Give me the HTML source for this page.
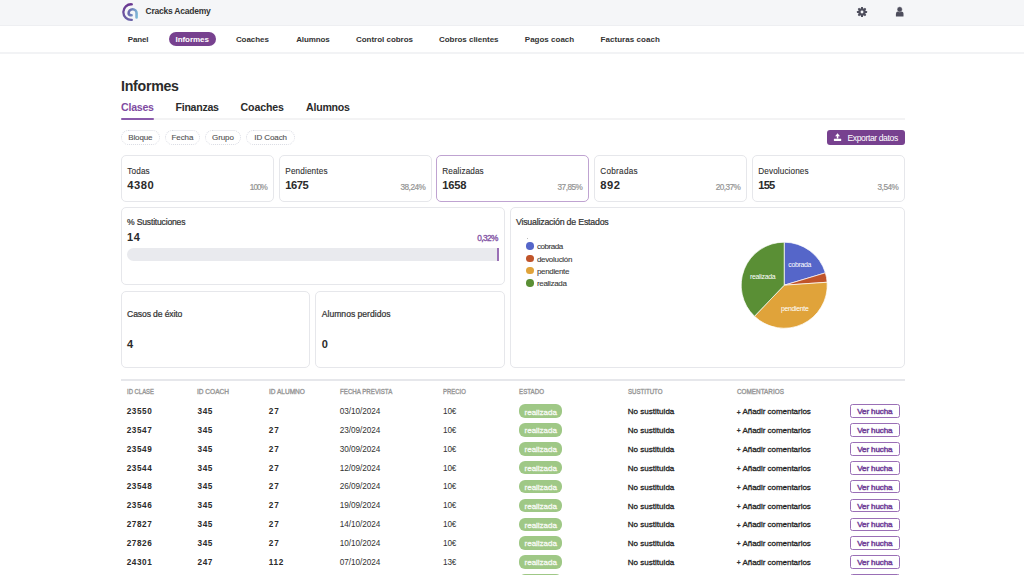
<!DOCTYPE html>
<html><head><meta charset="utf-8"><style>
html,body{margin:0;padding:0;width:1024px;height:575px;overflow:hidden;background:#fff}
body{position:relative;font-family:"Liberation Sans",sans-serif}
.t{position:absolute;line-height:0;white-space:nowrap}
.m{display:inline-block;width:0;height:0;vertical-align:baseline}
</style></head><body>
<div style="position:absolute;left:0.00px;top:0.00px;width:1024.00px;height:26.00px;background:#f5f6f8"></div>
<div style="position:absolute;left:0.00px;top:25.00px;width:1024.00px;height:1.00px;background:#eeeff2"></div>
<div style="position:absolute;left:0.00px;top:52.00px;width:1024.00px;height:2.00px;background:#f2f3f5"></div>
<div style="position:absolute;left:168.50px;top:32.00px;width:47.50px;height:14.00px;background:#77418f;border-radius:7px"></div>
<div style="position:absolute;left:121.00px;top:118.00px;width:784.00px;height:2.00px;background:#f3f3f4"></div>
<div style="position:absolute;left:121.00px;top:117.80px;width:33.40px;height:1.80px;background:#8a5aab;border-radius:1px"></div>
<div style="position:absolute;left:121.00px;top:130.00px;width:38.70px;height:14.80px;border:1px dotted #d9dbe3;border-radius:8px;box-sizing:border-box"></div>
<div style="position:absolute;left:165.00px;top:130.00px;width:35.00px;height:14.80px;border:1px dotted #d9dbe3;border-radius:8px;box-sizing:border-box"></div>
<div style="position:absolute;left:205.30px;top:130.00px;width:35.40px;height:14.80px;border:1px dotted #d9dbe3;border-radius:8px;box-sizing:border-box"></div>
<div style="position:absolute;left:246.30px;top:130.00px;width:48.70px;height:14.80px;border:1px dotted #d9dbe3;border-radius:8px;box-sizing:border-box"></div>
<div style="position:absolute;left:827.00px;top:130.00px;width:78.00px;height:15.00px;background:#77418f;border-radius:3px"></div>
<div style="position:absolute;left:121.00px;top:155.00px;width:153.00px;height:47.00px;border:1px solid #e6e7eb;border-radius:5px;box-sizing:border-box"></div>
<div style="position:absolute;left:279.00px;top:155.00px;width:153.00px;height:47.00px;border:1px solid #e6e7eb;border-radius:5px;box-sizing:border-box"></div>
<div style="position:absolute;left:436.00px;top:155.00px;width:153.00px;height:47.00px;border:1px solid #bfa3d1;border-radius:5px;box-sizing:border-box"></div>
<div style="position:absolute;left:594.00px;top:155.00px;width:153.00px;height:47.00px;border:1px solid #e6e7eb;border-radius:5px;box-sizing:border-box"></div>
<div style="position:absolute;left:752.00px;top:155.00px;width:153.00px;height:47.00px;border:1px solid #e6e7eb;border-radius:5px;box-sizing:border-box"></div>
<div style="position:absolute;left:121.00px;top:207.00px;width:384.00px;height:78.00px;border:1px solid #e6e7eb;border-radius:5px;box-sizing:border-box"></div>
<div style="position:absolute;left:127.00px;top:248.00px;width:372.00px;height:13.00px;background:#e9eaee;border-radius:6.5px 0 0 6.5px"></div>
<div style="position:absolute;left:497.10px;top:248.00px;width:1.90px;height:13.00px;background:#9a70b6"></div>
<div style="position:absolute;left:121.00px;top:291.00px;width:189.00px;height:77.00px;border:1px solid #e6e7eb;border-radius:5px;box-sizing:border-box"></div>
<div style="position:absolute;left:315.00px;top:291.00px;width:190.00px;height:77.00px;border:1px solid #e6e7eb;border-radius:5px;box-sizing:border-box"></div>
<div style="position:absolute;left:510.00px;top:207.00px;width:395.00px;height:161.00px;border:1px solid #e6e7eb;border-radius:5px;box-sizing:border-box"></div>
<div style="position:absolute;left:526.20px;top:242.40px;width:7.60px;height:7.60px;background:#5566c9;border-radius:50%"></div>
<div style="position:absolute;left:526.20px;top:254.70px;width:7.60px;height:7.60px;background:#c0542a;border-radius:50%"></div>
<div style="position:absolute;left:526.20px;top:266.80px;width:7.60px;height:7.60px;background:#e0a33a;border-radius:50%"></div>
<div style="position:absolute;left:526.20px;top:279.10px;width:7.60px;height:7.60px;background:#5a8f35;border-radius:50%"></div>
<div style="position:absolute;left:527.00px;top:238.40px;width:0.80px;height:0.80px;background:#bbb"></div>
<div style="position:absolute;left:121.00px;top:379.00px;width:784.00px;height:1.60px;background:#e6e7eb"></div>
<div style="position:absolute;left:519.20px;top:404.40px;width:43.10px;height:13.50px;background:#9fc886;border-radius:6px"></div>
<div style="position:absolute;left:850.30px;top:404.40px;width:49.40px;height:13.70px;border:1px solid #9a6fb6;border-radius:2.5px;box-sizing:border-box;background:#fff"></div>
<div style="position:absolute;left:519.20px;top:423.25px;width:43.10px;height:13.50px;background:#9fc886;border-radius:6px"></div>
<div style="position:absolute;left:850.30px;top:423.25px;width:49.40px;height:13.70px;border:1px solid #9a6fb6;border-radius:2.5px;box-sizing:border-box;background:#fff"></div>
<div style="position:absolute;left:519.20px;top:442.10px;width:43.10px;height:13.50px;background:#9fc886;border-radius:6px"></div>
<div style="position:absolute;left:850.30px;top:442.10px;width:49.40px;height:13.70px;border:1px solid #9a6fb6;border-radius:2.5px;box-sizing:border-box;background:#fff"></div>
<div style="position:absolute;left:519.20px;top:460.95px;width:43.10px;height:13.50px;background:#9fc886;border-radius:6px"></div>
<div style="position:absolute;left:850.30px;top:460.95px;width:49.40px;height:13.70px;border:1px solid #9a6fb6;border-radius:2.5px;box-sizing:border-box;background:#fff"></div>
<div style="position:absolute;left:519.20px;top:479.80px;width:43.10px;height:13.50px;background:#9fc886;border-radius:6px"></div>
<div style="position:absolute;left:850.30px;top:479.80px;width:49.40px;height:13.70px;border:1px solid #9a6fb6;border-radius:2.5px;box-sizing:border-box;background:#fff"></div>
<div style="position:absolute;left:519.20px;top:498.65px;width:43.10px;height:13.50px;background:#9fc886;border-radius:6px"></div>
<div style="position:absolute;left:850.30px;top:498.65px;width:49.40px;height:13.70px;border:1px solid #9a6fb6;border-radius:2.5px;box-sizing:border-box;background:#fff"></div>
<div style="position:absolute;left:519.20px;top:517.50px;width:43.10px;height:13.50px;background:#9fc886;border-radius:6px"></div>
<div style="position:absolute;left:850.30px;top:517.50px;width:49.40px;height:13.70px;border:1px solid #9a6fb6;border-radius:2.5px;box-sizing:border-box;background:#fff"></div>
<div style="position:absolute;left:519.20px;top:536.35px;width:43.10px;height:13.50px;background:#9fc886;border-radius:6px"></div>
<div style="position:absolute;left:850.30px;top:536.35px;width:49.40px;height:13.70px;border:1px solid #9a6fb6;border-radius:2.5px;box-sizing:border-box;background:#fff"></div>
<div style="position:absolute;left:519.20px;top:555.20px;width:43.10px;height:13.50px;background:#9fc886;border-radius:6px"></div>
<div style="position:absolute;left:850.30px;top:555.20px;width:49.40px;height:13.70px;border:1px solid #9a6fb6;border-radius:2.5px;box-sizing:border-box;background:#fff"></div>
<div style="position:absolute;left:519.20px;top:574.05px;width:43.10px;height:13.50px;background:#9fc886;border-radius:6px"></div>
<div style="position:absolute;left:850.30px;top:574.05px;width:49.40px;height:13.70px;border:1px solid #9a6fb6;border-radius:2.5px;box-sizing:border-box;background:#fff"></div>
<svg style="position:absolute;left:115px;top:0" width="30" height="25" viewBox="0 0 30 25">
<defs><linearGradient id="lg" gradientUnits="userSpaceOnUse" x1="12" y1="12" x2="23" y2="14"><stop offset="0" stop-color="#6659a6"/><stop offset="1" stop-color="#7fbcd9"/></linearGradient>
<linearGradient id="lg2" gradientUnits="userSpaceOnUse" x1="0" y1="4" x2="0" y2="20"><stop offset="0" stop-color="#6a3590"/><stop offset="1" stop-color="#6b63a8"/></linearGradient></defs>
<path d="M16.8 4.28 A7.8 7.8 0 1 0 16.8 19.82" fill="none" stroke="url(#lg2)" stroke-width="2.3" stroke-linecap="round"/>
<path d="M16.6 15.3 C15 15.3 13.65 14.6 13.65 13.2 A3.97 3.97 0 0 1 21.6 13.2 L21.6 17.4" fill="none" stroke="url(#lg)" stroke-width="2.6" stroke-linecap="round"/>
</svg>
<svg style="position:absolute;left:856px;top:5.8px" width="12" height="12" viewBox="0 0 12 12"><g><rect x="5.00" y="0.90" width="2" height="2.6" rx="0.4" transform="rotate(0 6 6)" fill="#4d4d5c"/><rect x="5.00" y="0.90" width="2" height="2.6" rx="0.4" transform="rotate(45 6 6)" fill="#4d4d5c"/><rect x="5.00" y="0.90" width="2" height="2.6" rx="0.4" transform="rotate(90 6 6)" fill="#4d4d5c"/><rect x="5.00" y="0.90" width="2" height="2.6" rx="0.4" transform="rotate(135 6 6)" fill="#4d4d5c"/><rect x="5.00" y="0.90" width="2" height="2.6" rx="0.4" transform="rotate(180 6 6)" fill="#4d4d5c"/><rect x="5.00" y="0.90" width="2" height="2.6" rx="0.4" transform="rotate(225 6 6)" fill="#4d4d5c"/><rect x="5.00" y="0.90" width="2" height="2.6" rx="0.4" transform="rotate(270 6 6)" fill="#4d4d5c"/><rect x="5.00" y="0.90" width="2" height="2.6" rx="0.4" transform="rotate(315 6 6)" fill="#4d4d5c"/></g><circle cx="6" cy="6" r="3.7" fill="#4d4d5c"/><circle cx="6" cy="6" r="1.45" fill="#f5f6f8"/></svg>
<svg style="position:absolute;left:895px;top:6px" width="10" height="11" viewBox="0 0 10 11"><path d="M0.9 10.2 V7.9 Q0.9 5.6 3.2 5.6 H5.8 Q8.5 5.6 8.5 7.9 V10.2 Q8.5 10.6 8.1 10.6 H1.3 Q0.9 10.6 0.9 10.2 Z" fill="#4d4d5c"/><circle cx="4.7" cy="3.4" r="2.55" fill="#4d4d5c" stroke="#f5f6f8" stroke-width="0.35"/></svg>
<svg style="position:absolute;left:833px;top:133px" width="9" height="8" viewBox="0 0 9 8"><path d="M4.55 0.2 L7.0 3.3 H5.3 V5.5 H3.8 V3.3 H2.1 Z" fill="#fff"/><rect x="0.9" y="5.7" width="7.3" height="2.2" rx="0.3" fill="#fff"/></svg>
<svg style="position:absolute;left:0;top:0" width="1024" height="575"><path d="M784.20 285.20 L784.20 242.20 A43 43 0 0 1 825.39 272.85 Z" fill="#5566c9" stroke="#fff" stroke-width="0.7"/><path d="M784.20 285.20 L825.39 272.85 A43 43 0 0 1 827.10 282.24 Z" fill="#c0542a" stroke="#fff" stroke-width="0.7"/><path d="M784.20 285.20 L827.10 282.24 A43 43 0 0 1 754.48 316.27 Z" fill="#e0a33a" stroke="#fff" stroke-width="0.7"/><path d="M784.20 285.20 L754.48 316.27 A43 43 0 0 1 784.20 242.20 Z" fill="#5a8f35" stroke="#fff" stroke-width="0.7"/></svg>
<div class="t" style="left:145.50px;top:11.31px;font-size:8.50px;font-weight:bold;color:#333;letter-spacing:-0.231px;">Cracks Academy</div>
<div class="t" style="left:127.80px;top:39.81px;font-size:8.00px;font-weight:bold;color:#333;letter-spacing:-0.161px;">Panel</div>
<div class="t" style="left:175.50px;top:39.81px;font-size:8.00px;font-weight:bold;color:#fff;letter-spacing:-0.057px;">Informes</div>
<div class="t" style="left:235.90px;top:39.81px;font-size:8.00px;font-weight:bold;color:#333;letter-spacing:-0.043px;">Coaches</div>
<div class="t" style="left:296.20px;top:39.81px;font-size:8.00px;font-weight:bold;color:#333;letter-spacing:-0.139px;">Alumnos</div>
<div class="t" style="left:356.00px;top:39.81px;font-size:8.00px;font-weight:bold;color:#333;letter-spacing:-0.026px;">Control cobros</div>
<div class="t" style="left:439.00px;top:39.81px;font-size:8.00px;font-weight:bold;color:#333;letter-spacing:-0.037px;">Cobros clientes</div>
<div class="t" style="left:524.80px;top:39.81px;font-size:8.00px;font-weight:bold;color:#333;letter-spacing:0.004px;">Pagos coach</div>
<div class="t" style="left:600.60px;top:39.81px;font-size:8.00px;font-weight:bold;color:#333;letter-spacing:0.038px;">Facturas coach</div>
<div class="t" style="left:121.00px;top:85.75px;font-size:14.20px;font-weight:bold;color:#2b2b2b;letter-spacing:-0.275px;">Informes</div>
<div class="t" style="left:121.00px;top:107.21px;font-size:10.60px;font-weight:bold;color:#7f4ca2;letter-spacing:-0.234px;">Clases</div>
<div class="t" style="left:175.50px;top:107.21px;font-size:10.60px;font-weight:bold;color:#2b2b2b;letter-spacing:-0.263px;">Finanzas</div>
<div class="t" style="left:240.50px;top:107.21px;font-size:10.60px;font-weight:bold;color:#2b2b2b;letter-spacing:-0.112px;">Coaches</div>
<div class="t" style="left:306.00px;top:107.21px;font-size:10.60px;font-weight:bold;color:#2b2b2b;letter-spacing:-0.221px;">Alumnos</div>
<div class="t" style="left:140.30px;top:138.31px;font-size:8.00px;-webkit-text-stroke:0.1px #505050;color:#505050;transform:translateX(-50%);letter-spacing:-0.100px;">Bloque</div>
<div class="t" style="left:182.44px;top:138.31px;font-size:8.00px;-webkit-text-stroke:0.1px #505050;color:#505050;transform:translateX(-50%);letter-spacing:-0.111px;">Fecha</div>
<div class="t" style="left:222.94px;top:138.31px;font-size:8.00px;-webkit-text-stroke:0.1px #505050;color:#505050;transform:translateX(-50%);letter-spacing:-0.111px;">Grupo</div>
<div class="t" style="left:270.60px;top:138.31px;font-size:8.00px;-webkit-text-stroke:0.1px #505050;color:#505050;transform:translateX(-50%);letter-spacing:-0.095px;">ID Coach</div>
<div class="t" style="left:847.40px;top:138.00px;font-size:8.60px;color:#fff;letter-spacing:-0.392px;">Exportar datos</div>
<div class="t" style="left:127.30px;top:171.80px;font-size:8.20px;-webkit-text-stroke:0.1px #303030;color:#303030;letter-spacing:0.135px;">Todas</div>
<div class="t" style="left:127.30px;top:185.01px;font-size:11.20px;font-weight:bold;color:#2b2b2b;letter-spacing:0.536px;">4380</div>
<div class="t" style="right:756.20px;top:187.61px;font-size:8.20px;-webkit-text-stroke:0.2px #949494;color:#949494;letter-spacing:-0.984px;margin-right:0.984px;">100%</div>
<div class="t" style="left:285.30px;top:171.80px;font-size:8.20px;-webkit-text-stroke:0.1px #303030;color:#303030;letter-spacing:0.135px;">Pendientes</div>
<div class="t" style="left:285.30px;top:185.01px;font-size:11.20px;font-weight:bold;color:#2b2b2b;letter-spacing:-0.497px;">1675</div>
<div class="t" style="right:598.20px;top:187.61px;font-size:8.20px;-webkit-text-stroke:0.2px #949494;color:#949494;letter-spacing:-0.476px;margin-right:0.476px;">38,24%</div>
<div class="t" style="left:442.30px;top:171.80px;font-size:8.20px;-webkit-text-stroke:0.1px #303030;color:#303030;letter-spacing:0.098px;">Realizadas</div>
<div class="t" style="left:442.30px;top:185.01px;font-size:11.20px;font-weight:bold;color:#2b2b2b;letter-spacing:-0.230px;">1658</div>
<div class="t" style="right:441.20px;top:187.61px;font-size:8.20px;-webkit-text-stroke:0.2px #949494;color:#949494;letter-spacing:-0.496px;margin-right:0.496px;">37,85%</div>
<div class="t" style="left:600.30px;top:171.80px;font-size:8.20px;-webkit-text-stroke:0.1px #303030;color:#303030;letter-spacing:0.269px;">Cobradas</div>
<div class="t" style="left:600.30px;top:185.01px;font-size:11.20px;font-weight:bold;color:#2b2b2b;letter-spacing:0.464px;">892</div>
<div class="t" style="right:283.20px;top:187.61px;font-size:8.20px;-webkit-text-stroke:0.2px #949494;color:#949494;letter-spacing:-0.556px;margin-right:0.556px;">20,37%</div>
<div class="t" style="left:758.30px;top:171.80px;font-size:8.20px;-webkit-text-stroke:0.1px #303030;color:#303030;letter-spacing:0.099px;">Devoluciones</div>
<div class="t" style="left:758.30px;top:185.01px;font-size:11.20px;font-weight:bold;color:#2b2b2b;letter-spacing:-0.836px;">155</div>
<div class="t" style="right:125.20px;top:187.61px;font-size:8.20px;-webkit-text-stroke:0.2px #949494;color:#949494;letter-spacing:-0.492px;margin-right:0.492px;">3,54%</div>
<div class="t" style="left:127.10px;top:222.41px;font-size:8.60px;-webkit-text-stroke:0.22px #333;color:#333;letter-spacing:-0.197px;">% Sustituciones</div>
<div class="t" style="left:127.10px;top:237.00px;font-size:11.00px;font-weight:bold;color:#2b2b2b;letter-spacing:0.613px;">14</div>
<div class="t" style="right:525.60px;top:238.32px;font-size:8.30px;-webkit-text-stroke:0.35px #8455a6;color:#8455a6;letter-spacing:-0.608px;margin-right:0.608px;">0,32%</div>
<div class="t" style="left:127.10px;top:313.61px;font-size:8.60px;-webkit-text-stroke:0.22px #333;color:#333;letter-spacing:-0.120px;">Casos de éxito</div>
<div class="t" style="left:127.10px;top:343.50px;font-size:11.00px;font-weight:bold;color:#2b2b2b;">4</div>
<div class="t" style="left:321.80px;top:313.61px;font-size:8.60px;-webkit-text-stroke:0.22px #333;color:#333;letter-spacing:-0.006px;">Alumnos perdidos</div>
<div class="t" style="left:321.80px;top:343.50px;font-size:11.00px;font-weight:bold;color:#2b2b2b;">0</div>
<div class="t" style="left:515.90px;top:222.10px;font-size:8.80px;-webkit-text-stroke:0.22px #333;color:#333;letter-spacing:-0.207px;">Visualización de Estados</div>
<div class="t" style="left:536.90px;top:247.31px;font-size:8.00px;-webkit-text-stroke:0.1px #3a3a3a;color:#3a3a3a;letter-spacing:-0.437px;">cobrada</div>
<div class="t" style="left:536.90px;top:259.60px;font-size:8.00px;-webkit-text-stroke:0.1px #3a3a3a;color:#3a3a3a;letter-spacing:-0.306px;">devolución</div>
<div class="t" style="left:536.90px;top:271.70px;font-size:8.00px;-webkit-text-stroke:0.1px #3a3a3a;color:#3a3a3a;letter-spacing:-0.320px;">pendiente</div>
<div class="t" style="left:536.90px;top:284.01px;font-size:8.00px;-webkit-text-stroke:0.1px #3a3a3a;color:#3a3a3a;letter-spacing:-0.309px;">realizada</div>
<div class="t" style="left:799.63px;top:265.30px;font-size:6.90px;color:#fff;transform:translateX(-50%);letter-spacing:-0.334px;">cobrada</div>
<div class="t" style="left:762.65px;top:277.21px;font-size:6.90px;color:#fff;transform:translateX(-50%);letter-spacing:-0.296px;">realizada</div>
<div class="t" style="left:794.74px;top:309.30px;font-size:6.90px;color:#fff;transform:translateX(-50%);letter-spacing:-0.323px;">pendiente</div>
<div class="t" style="left:126.70px;top:391.61px;font-size:6.80px;-webkit-text-stroke:0.35px #979797;color:#979797;transform:scaleX(0.8714);transform-origin:left;">ID CLASE</div>
<div class="t" style="left:197.40px;top:391.61px;font-size:6.80px;-webkit-text-stroke:0.35px #979797;color:#979797;transform:scaleX(0.9629);transform-origin:left;">ID COACH</div>
<div class="t" style="left:268.70px;top:391.61px;font-size:6.80px;-webkit-text-stroke:0.35px #979797;color:#979797;transform:scaleX(0.9601);transform-origin:left;">ID ALUMNO</div>
<div class="t" style="left:339.80px;top:391.61px;font-size:6.80px;-webkit-text-stroke:0.35px #979797;color:#979797;transform:scaleX(0.9069);transform-origin:left;">FECHA PREVISTA</div>
<div class="t" style="left:442.90px;top:391.61px;font-size:6.80px;-webkit-text-stroke:0.35px #979797;color:#979797;transform:scaleX(0.8748);transform-origin:left;">PRECIO</div>
<div class="t" style="left:519.20px;top:391.61px;font-size:6.80px;-webkit-text-stroke:0.35px #979797;color:#979797;transform:scaleX(0.9106);transform-origin:left;">ESTADO</div>
<div class="t" style="left:627.80px;top:391.61px;font-size:6.80px;-webkit-text-stroke:0.35px #979797;color:#979797;transform:scaleX(0.8983);transform-origin:left;">SUSTITUTO</div>
<div class="t" style="left:736.60px;top:391.61px;font-size:6.80px;-webkit-text-stroke:0.35px #979797;color:#979797;transform:scaleX(0.9360);transform-origin:left;">COMENTARIOS</div>
<div class="t" style="left:126.70px;top:412.00px;font-size:8.20px;font-weight:bold;color:#2b2b2b;letter-spacing:0.570px;">23550</div>
<div class="t" style="left:197.40px;top:412.00px;font-size:8.20px;font-weight:bold;color:#2b2b2b;letter-spacing:0.684px;">345</div>
<div class="t" style="left:268.70px;top:412.00px;font-size:8.20px;font-weight:bold;color:#2b2b2b;letter-spacing:0.911px;">27</div>
<div class="t" style="left:339.80px;top:412.00px;font-size:8.20px;color:#333;letter-spacing:-0.046px;">03/10/2024</div>
<div class="t" style="left:442.90px;top:412.00px;font-size:8.20px;color:#333;letter-spacing:-0.068px;">10€</div>
<div class="t" style="left:627.80px;top:412.31px;font-size:8.00px;-webkit-text-stroke:0.3px #262626;color:#262626;letter-spacing:0.021px;">No sustituida</div>
<div class="t" style="left:736.70px;top:412.51px;font-size:6.60px;-webkit-text-stroke:0.35px #333;color:#333;">+</div>
<div class="t" style="left:742.50px;top:412.31px;font-size:8.00px;-webkit-text-stroke:0.3px #262626;color:#262626;letter-spacing:-0.037px;">Añadir comentarios</div>
<div class="t" style="left:540.74px;top:412.51px;font-size:8.00px;-webkit-text-stroke:0.3px #f6f9f3;color:#f6f9f3;transform:translateX(-50%);letter-spacing:-0.021px;">realizada</div>
<div class="t" style="left:874.84px;top:412.31px;font-size:8.00px;-webkit-text-stroke:0.5px #74449a;color:#74449a;transform:translateX(-50%);letter-spacing:-0.116px;">Ver hucha</div>
<div class="t" style="left:126.70px;top:430.86px;font-size:8.20px;font-weight:bold;color:#2b2b2b;letter-spacing:0.570px;">23547</div>
<div class="t" style="left:197.40px;top:430.86px;font-size:8.20px;font-weight:bold;color:#2b2b2b;letter-spacing:0.684px;">345</div>
<div class="t" style="left:268.70px;top:430.86px;font-size:8.20px;font-weight:bold;color:#2b2b2b;letter-spacing:0.911px;">27</div>
<div class="t" style="left:339.80px;top:430.86px;font-size:8.20px;color:#333;letter-spacing:-0.046px;">23/09/2024</div>
<div class="t" style="left:442.90px;top:430.86px;font-size:8.20px;color:#333;letter-spacing:-0.068px;">10€</div>
<div class="t" style="left:627.80px;top:431.15px;font-size:8.00px;-webkit-text-stroke:0.3px #262626;color:#262626;letter-spacing:0.021px;">No sustituida</div>
<div class="t" style="left:736.70px;top:431.36px;font-size:6.60px;-webkit-text-stroke:0.35px #333;color:#333;">+</div>
<div class="t" style="left:742.50px;top:431.15px;font-size:8.00px;-webkit-text-stroke:0.3px #262626;color:#262626;letter-spacing:-0.037px;">Añadir comentarios</div>
<div class="t" style="left:540.74px;top:431.35px;font-size:8.00px;-webkit-text-stroke:0.3px #f6f9f3;color:#f6f9f3;transform:translateX(-50%);letter-spacing:-0.021px;">realizada</div>
<div class="t" style="left:874.84px;top:431.15px;font-size:8.00px;-webkit-text-stroke:0.5px #74449a;color:#74449a;transform:translateX(-50%);letter-spacing:-0.116px;">Ver hucha</div>
<div class="t" style="left:126.70px;top:449.70px;font-size:8.20px;font-weight:bold;color:#2b2b2b;letter-spacing:0.570px;">23549</div>
<div class="t" style="left:197.40px;top:449.70px;font-size:8.20px;font-weight:bold;color:#2b2b2b;letter-spacing:0.684px;">345</div>
<div class="t" style="left:268.70px;top:449.70px;font-size:8.20px;font-weight:bold;color:#2b2b2b;letter-spacing:0.911px;">27</div>
<div class="t" style="left:339.80px;top:449.70px;font-size:8.20px;color:#333;letter-spacing:-0.046px;">30/09/2024</div>
<div class="t" style="left:442.90px;top:449.70px;font-size:8.20px;color:#333;letter-spacing:-0.068px;">10€</div>
<div class="t" style="left:627.80px;top:450.01px;font-size:8.00px;-webkit-text-stroke:0.3px #262626;color:#262626;letter-spacing:0.021px;">No sustituida</div>
<div class="t" style="left:736.70px;top:450.21px;font-size:6.60px;-webkit-text-stroke:0.35px #333;color:#333;">+</div>
<div class="t" style="left:742.50px;top:450.01px;font-size:8.00px;-webkit-text-stroke:0.3px #262626;color:#262626;letter-spacing:-0.037px;">Añadir comentarios</div>
<div class="t" style="left:540.74px;top:450.20px;font-size:8.00px;-webkit-text-stroke:0.3px #f6f9f3;color:#f6f9f3;transform:translateX(-50%);letter-spacing:-0.021px;">realizada</div>
<div class="t" style="left:874.84px;top:450.01px;font-size:8.00px;-webkit-text-stroke:0.5px #74449a;color:#74449a;transform:translateX(-50%);letter-spacing:-0.116px;">Ver hucha</div>
<div class="t" style="left:126.70px;top:468.55px;font-size:8.20px;font-weight:bold;color:#2b2b2b;letter-spacing:0.570px;">23544</div>
<div class="t" style="left:197.40px;top:468.55px;font-size:8.20px;font-weight:bold;color:#2b2b2b;letter-spacing:0.684px;">345</div>
<div class="t" style="left:268.70px;top:468.55px;font-size:8.20px;font-weight:bold;color:#2b2b2b;letter-spacing:0.911px;">27</div>
<div class="t" style="left:339.80px;top:468.55px;font-size:8.20px;color:#333;letter-spacing:-0.046px;">12/09/2024</div>
<div class="t" style="left:442.90px;top:468.55px;font-size:8.20px;color:#333;letter-spacing:-0.068px;">10€</div>
<div class="t" style="left:627.80px;top:468.85px;font-size:8.00px;-webkit-text-stroke:0.3px #262626;color:#262626;letter-spacing:0.021px;">No sustituida</div>
<div class="t" style="left:736.70px;top:469.06px;font-size:6.60px;-webkit-text-stroke:0.35px #333;color:#333;">+</div>
<div class="t" style="left:742.50px;top:468.85px;font-size:8.00px;-webkit-text-stroke:0.3px #262626;color:#262626;letter-spacing:-0.037px;">Añadir comentarios</div>
<div class="t" style="left:540.74px;top:469.06px;font-size:8.00px;-webkit-text-stroke:0.3px #f6f9f3;color:#f6f9f3;transform:translateX(-50%);letter-spacing:-0.021px;">realizada</div>
<div class="t" style="left:874.84px;top:468.85px;font-size:8.00px;-webkit-text-stroke:0.5px #74449a;color:#74449a;transform:translateX(-50%);letter-spacing:-0.116px;">Ver hucha</div>
<div class="t" style="left:126.70px;top:487.41px;font-size:8.20px;font-weight:bold;color:#2b2b2b;letter-spacing:0.570px;">23548</div>
<div class="t" style="left:197.40px;top:487.41px;font-size:8.20px;font-weight:bold;color:#2b2b2b;letter-spacing:0.684px;">345</div>
<div class="t" style="left:268.70px;top:487.41px;font-size:8.20px;font-weight:bold;color:#2b2b2b;letter-spacing:0.911px;">27</div>
<div class="t" style="left:339.80px;top:487.41px;font-size:8.20px;color:#333;letter-spacing:-0.046px;">26/09/2024</div>
<div class="t" style="left:442.90px;top:487.41px;font-size:8.20px;color:#333;letter-spacing:-0.068px;">10€</div>
<div class="t" style="left:627.80px;top:487.70px;font-size:8.00px;-webkit-text-stroke:0.3px #262626;color:#262626;letter-spacing:0.021px;">No sustituida</div>
<div class="t" style="left:736.70px;top:487.90px;font-size:6.60px;-webkit-text-stroke:0.35px #333;color:#333;">+</div>
<div class="t" style="left:742.50px;top:487.70px;font-size:8.00px;-webkit-text-stroke:0.3px #262626;color:#262626;letter-spacing:-0.037px;">Añadir comentarios</div>
<div class="t" style="left:540.74px;top:487.90px;font-size:8.00px;-webkit-text-stroke:0.3px #f6f9f3;color:#f6f9f3;transform:translateX(-50%);letter-spacing:-0.021px;">realizada</div>
<div class="t" style="left:874.84px;top:487.70px;font-size:8.00px;-webkit-text-stroke:0.5px #74449a;color:#74449a;transform:translateX(-50%);letter-spacing:-0.116px;">Ver hucha</div>
<div class="t" style="left:126.70px;top:506.25px;font-size:8.20px;font-weight:bold;color:#2b2b2b;letter-spacing:0.570px;">23546</div>
<div class="t" style="left:197.40px;top:506.25px;font-size:8.20px;font-weight:bold;color:#2b2b2b;letter-spacing:0.684px;">345</div>
<div class="t" style="left:268.70px;top:506.25px;font-size:8.20px;font-weight:bold;color:#2b2b2b;letter-spacing:0.911px;">27</div>
<div class="t" style="left:339.80px;top:506.25px;font-size:8.20px;color:#333;letter-spacing:-0.046px;">19/09/2024</div>
<div class="t" style="left:442.90px;top:506.25px;font-size:8.20px;color:#333;letter-spacing:-0.068px;">10€</div>
<div class="t" style="left:627.80px;top:506.56px;font-size:8.00px;-webkit-text-stroke:0.3px #262626;color:#262626;letter-spacing:0.021px;">No sustituida</div>
<div class="t" style="left:736.70px;top:506.76px;font-size:6.60px;-webkit-text-stroke:0.35px #333;color:#333;">+</div>
<div class="t" style="left:742.50px;top:506.56px;font-size:8.00px;-webkit-text-stroke:0.3px #262626;color:#262626;letter-spacing:-0.037px;">Añadir comentarios</div>
<div class="t" style="left:540.74px;top:506.76px;font-size:8.00px;-webkit-text-stroke:0.3px #f6f9f3;color:#f6f9f3;transform:translateX(-50%);letter-spacing:-0.021px;">realizada</div>
<div class="t" style="left:874.84px;top:506.56px;font-size:8.00px;-webkit-text-stroke:0.5px #74449a;color:#74449a;transform:translateX(-50%);letter-spacing:-0.116px;">Ver hucha</div>
<div class="t" style="left:126.70px;top:525.11px;font-size:8.20px;font-weight:bold;color:#2b2b2b;letter-spacing:0.570px;">27827</div>
<div class="t" style="left:197.40px;top:525.11px;font-size:8.20px;font-weight:bold;color:#2b2b2b;letter-spacing:0.684px;">345</div>
<div class="t" style="left:268.70px;top:525.11px;font-size:8.20px;font-weight:bold;color:#2b2b2b;letter-spacing:0.911px;">27</div>
<div class="t" style="left:339.80px;top:525.11px;font-size:8.20px;color:#333;letter-spacing:-0.046px;">14/10/2024</div>
<div class="t" style="left:442.90px;top:525.11px;font-size:8.20px;color:#333;letter-spacing:-0.068px;">10€</div>
<div class="t" style="left:627.80px;top:525.40px;font-size:8.00px;-webkit-text-stroke:0.3px #262626;color:#262626;letter-spacing:0.021px;">No sustituida</div>
<div class="t" style="left:736.70px;top:525.61px;font-size:6.60px;-webkit-text-stroke:0.35px #333;color:#333;">+</div>
<div class="t" style="left:742.50px;top:525.40px;font-size:8.00px;-webkit-text-stroke:0.3px #262626;color:#262626;letter-spacing:-0.037px;">Añadir comentarios</div>
<div class="t" style="left:540.74px;top:525.60px;font-size:8.00px;-webkit-text-stroke:0.3px #f6f9f3;color:#f6f9f3;transform:translateX(-50%);letter-spacing:-0.021px;">realizada</div>
<div class="t" style="left:874.84px;top:525.40px;font-size:8.00px;-webkit-text-stroke:0.5px #74449a;color:#74449a;transform:translateX(-50%);letter-spacing:-0.116px;">Ver hucha</div>
<div class="t" style="left:126.70px;top:543.95px;font-size:8.20px;font-weight:bold;color:#2b2b2b;letter-spacing:0.570px;">27826</div>
<div class="t" style="left:197.40px;top:543.95px;font-size:8.20px;font-weight:bold;color:#2b2b2b;letter-spacing:0.684px;">345</div>
<div class="t" style="left:268.70px;top:543.95px;font-size:8.20px;font-weight:bold;color:#2b2b2b;letter-spacing:0.911px;">27</div>
<div class="t" style="left:339.80px;top:543.95px;font-size:8.20px;color:#333;letter-spacing:-0.046px;">10/10/2024</div>
<div class="t" style="left:442.90px;top:543.95px;font-size:8.20px;color:#333;letter-spacing:-0.068px;">10€</div>
<div class="t" style="left:627.80px;top:544.26px;font-size:8.00px;-webkit-text-stroke:0.3px #262626;color:#262626;letter-spacing:0.021px;">No sustituida</div>
<div class="t" style="left:736.70px;top:544.46px;font-size:6.60px;-webkit-text-stroke:0.35px #333;color:#333;">+</div>
<div class="t" style="left:742.50px;top:544.26px;font-size:8.00px;-webkit-text-stroke:0.3px #262626;color:#262626;letter-spacing:-0.037px;">Añadir comentarios</div>
<div class="t" style="left:540.74px;top:544.45px;font-size:8.00px;-webkit-text-stroke:0.3px #f6f9f3;color:#f6f9f3;transform:translateX(-50%);letter-spacing:-0.021px;">realizada</div>
<div class="t" style="left:874.84px;top:544.26px;font-size:8.00px;-webkit-text-stroke:0.5px #74449a;color:#74449a;transform:translateX(-50%);letter-spacing:-0.116px;">Ver hucha</div>
<div class="t" style="left:126.70px;top:562.80px;font-size:8.20px;font-weight:bold;color:#2b2b2b;letter-spacing:0.570px;">24301</div>
<div class="t" style="left:197.40px;top:562.80px;font-size:8.20px;font-weight:bold;color:#2b2b2b;letter-spacing:0.684px;">247</div>
<div class="t" style="left:268.70px;top:562.80px;font-size:8.20px;font-weight:bold;color:#2b2b2b;letter-spacing:0.661px;">112</div>
<div class="t" style="left:339.80px;top:562.80px;font-size:8.20px;color:#333;letter-spacing:-0.046px;">07/10/2024</div>
<div class="t" style="left:442.90px;top:562.80px;font-size:8.20px;color:#333;letter-spacing:-0.068px;">13€</div>
<div class="t" style="left:627.80px;top:563.10px;font-size:8.00px;-webkit-text-stroke:0.3px #262626;color:#262626;letter-spacing:0.021px;">No sustituida</div>
<div class="t" style="left:736.70px;top:563.31px;font-size:6.60px;-webkit-text-stroke:0.35px #333;color:#333;">+</div>
<div class="t" style="left:742.50px;top:563.10px;font-size:8.00px;-webkit-text-stroke:0.3px #262626;color:#262626;letter-spacing:-0.037px;">Añadir comentarios</div>
<div class="t" style="left:540.74px;top:563.31px;font-size:8.00px;-webkit-text-stroke:0.3px #f6f9f3;color:#f6f9f3;transform:translateX(-50%);letter-spacing:-0.021px;">realizada</div>
<div class="t" style="left:874.84px;top:563.10px;font-size:8.00px;-webkit-text-stroke:0.5px #74449a;color:#74449a;transform:translateX(-50%);letter-spacing:-0.116px;">Ver hucha</div>
</body></html>
